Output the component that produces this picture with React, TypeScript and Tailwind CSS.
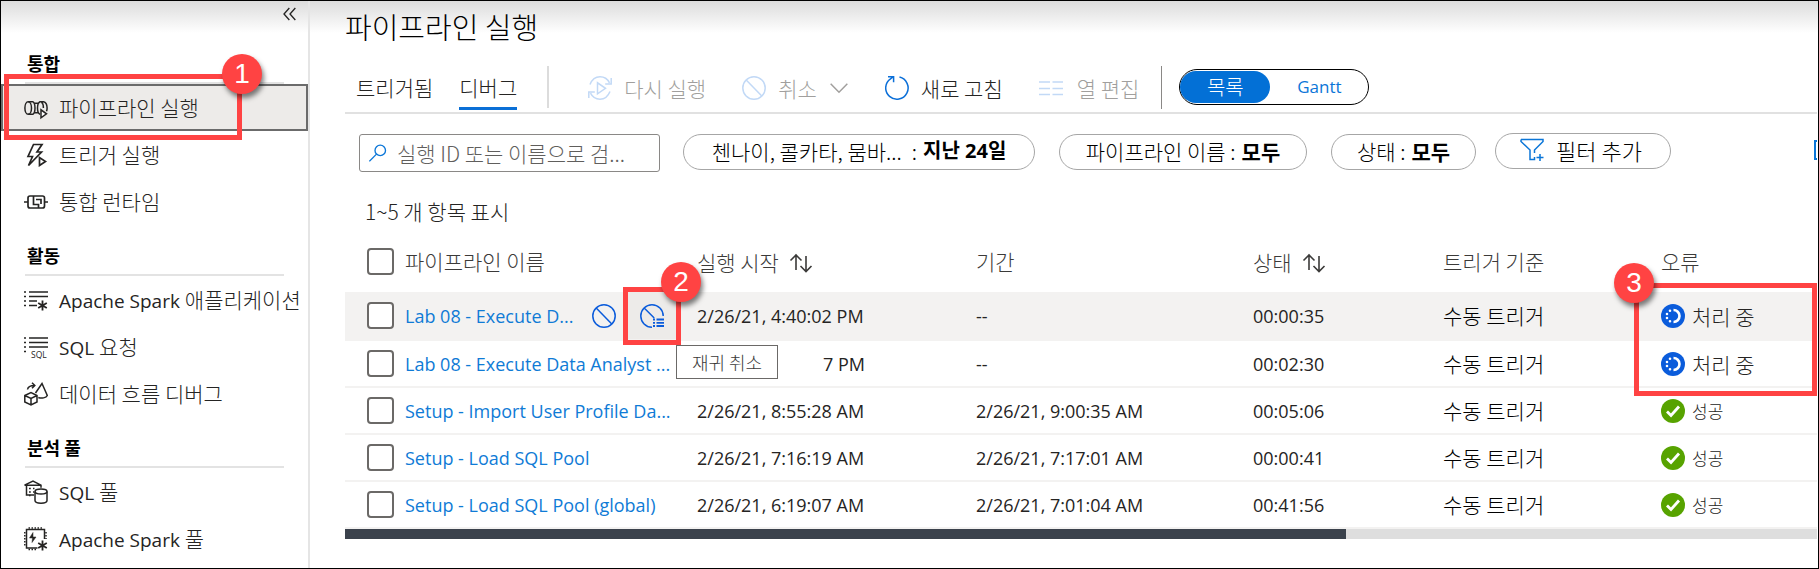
import type { ReactNode } from 'react';

const Ko = ({ children, className = 'text-[21px]' }: { children: ReactNode; className?: string }) => (
  <span className={`font-['Noto_Sans_CJK_KR_Light','Noto_Sans_CJK_KR',sans-serif] font-light ${className}`}>{children}</span>
);

type IconProps = { children: ReactNode; className?: string };
const Icon = ({ children, className = 'size-6' }: IconProps) => (
  <svg viewBox="0 0 24 24" fill="none" stroke="currentColor" strokeWidth="1.5" className={`shrink-0 ${className}`} aria-hidden="true">
    {children}
  </svg>
);

const PipelineRunIcon = () => (
  <Icon>
    <ellipse cx="4.200" cy="12" rx="3.300" ry="6.300" />
    <path d="M4.200 5.700h5M4.200 18.300h5M8.800 5.700c1.500.8 2.200 3.200 2.200 6.300s-.7 5.500-2.200 6.300M10.500 7.200h3.500M10.500 16.800h3.500M16 18.300c-1.800-.8-2.500-3.200-2.500-6.300s.7-5.500 2.500-6.300M15.500 5.700h4c2.200.5 3.600 3 3.600 6.300 0 1.200-.2 2.300-.6 3.200M17.500 5.900c1.300 1.200 1.900 3.500 1.900 6.100" />
    <path d="M17 13.800v8l5.500-4Z" fill="white" />
  </Icon>
);
const TriggerRunIcon = () => (
  <Icon>
    <path d="M9.500 1.500h8.500l-5 7.500h4.500L4.500 22.500 8.500 13.500H4Z" strokeWidth="1.700" />
    <path d="M15.500 14.500v8l6-4Z" fill="white" strokeWidth="1.700" />
  </Icon>
);
const RuntimeIcon = () => (
  <Icon>
    <path d="M0 12h4M20.500 12H24M14.500 18H6a2 2 0 0 1-2-2V8a2 2 0 0 1 2-2h3.500v8.500h5V18M9.500 6h9a2 2 0 0 1 2 2v8a2 2 0 0 1-2 2h-4M12 9.500h5V14" strokeWidth="1.700" />
  </Icon>
);
const SparkAppIcon = () => (
  <Icon>
    <path d="M5 4h19M5 8.500h19M5 13h8M5 17.500h8" />
    <path d="M0 4h2M0 8.500h2M0 13h2M0 17.500h2" />
    <path d="M18.500 12.500v10M14.200 15l8.600 5M22.800 15l-8.600 5" strokeWidth="1.800" />
  </Icon>
);
const SqlRequestIcon = () => (
  <Icon>
    <path d="M5 3h19M5 7.500h19M5 12h19M0 3h2M0 7.500h2M0 12h2M0 16.500h2" />
    <text x="7" y="22.500" fontSize="8.500" fill="currentColor" stroke="none" fontFamily="Open Sans, sans-serif">SQL</text>
  </Icon>
);
const DataFlowIcon = () => (
  <Icon>
    <path d="M.8 13.500 7 10.500l6 3v6.500l-6 3-6.200-3ZM.8 13.500l6.200 3 6-3M7 16.500V23" />
    <path d="M11.500 11 18 1.500l5.300 12c-1 2.500-6 3.200-9 2" />
    <path d="M3.500 7.500C4 4.500 6.500 3.500 10.500 3.500M8 .8l2.800 2.700L8 6.200" />
  </Icon>
);
const SqlPoolIcon = () => (
  <Icon>
    <path d="M10 15H2.500V4.800M.5 5.200 9 1l8 4.200v2.500M.5 5.200H17" />
    <path d="M5 8.500h1.800M9 8.500h1.500M5 12h1.800M9 12h1M5 15.500h1.500" strokeDasharray="1.800 1" />
    <ellipse cx="17" cy="11.500" rx="6" ry="2.500" />
    <path d="M11 11.500V20.500c0 1.500 2.500 2.700 6 2.700s6-1.200 6-2.700v-9" />
  </Icon>
);
const SparkPoolIcon = () => (
  <Icon>
    <path d="M13.500 21H2.500V2.500H20.500V12" />
    <path d="M.8 5v14M22 5v7" strokeDasharray="1.500 1.500" />
    <path d="M4.500 1h15M4.500 22.500h8" strokeDasharray="1.500 1.500" />
    <path d="M9 5.500 5.500 11h3l-.5 4.500L12 10H9Z" fill="currentColor" strokeWidth=".5" />
    <path d="M18.500 13.500v10M14.200 16l8.600 5M22.800 16l-8.600 5" strokeWidth="1.800" />
  </Icon>
);
const BanIcon = () => (
  <Icon>
    <circle cx="12" cy="12" r="11.200" />
    <path d="m4.200 4 15.600 16" />
  </Icon>
);
const BanListIcon = () => (
  <Icon>
    <path d="M12 23.200A11.200 11.200 0 1 1 23.200 12M4.200 4l10 10" />
    <path d="M13 15.500h2M13 18.800h2M13 22h2M16.500 15.500H24M16.500 18.800H24M16.500 22H24" strokeWidth="1.800" />
  </Icon>
);
const RerunIcon = () => (
  <Icon>
    <path d="M2 8.500C4 3.500 7.500.8 12 .8c4 0 7.500 2 9.500 6M23.200 2v6h-6M22 15.500c-2 5-5.500 7.700-10 7.700-4 0-7.500-2-9.500-6M.8 22v-6h6" />
    <path d="M9.500 6.800v11l8-5.500Z" />
  </Icon>
);
const RefreshIcon = () => (
  <Icon>
    <path d="M14.500 1.100A11.200 11.200 0 1 1 5.500 2.800L8 1M3 .8h5.600v5.500" />
  </Icon>
);
const ColumnsIcon = () => (
  <Icon>
    <path d="M0 6h11M13.500 6H24M0 12.500h11M13.500 12.500H24M0 18.500h11M13.500 18.500H24" />
  </Icon>
);
const FilterIcon = () => (
  <Icon>
    <path d="M1 1.500h22v2L14.500 12v3M1 1.500v2L10 12v9.500h4.500V19M20 16v7M16.500 19.500h7" />
  </Icon>
);
const SortIcon = () => (
  <Icon>
    <path d="M7 20V5M1.500 10.500 7 5l5.500 5.500M17 6v15.500M11.500 16l5.500 5.500 5.500-5.500" strokeWidth="1.600" />
  </Icon>
);
const ProgressIcon = () => (
  <Icon>
    <circle cx="12" cy="12" r="12" fill="#0b5cdb" stroke="none" />
    <path d="M12.500 6a6 6 0 0 1 0 12" stroke="white" strokeWidth="2.600" />
    <path d="M9 6.800h.01M6 10h.01M6 14h.01M9 17.200h.01" stroke="white" strokeWidth="2.600" strokeLinecap="round" />
  </Icon>
);
const SuccessIcon = () => (
  <Icon>
    <circle cx="12" cy="12" r="12" fill="#57a300" stroke="none" />
    <path d="m6 12.500 4 4 8-9" stroke="white" strokeWidth="2.800" />
  </Icon>
);

const Callout = ({ n, className }: { n: number; className: string }) => (
  <span className={`absolute z-20 flex size-10 items-center justify-center rounded-full bg-[#ff4343] font-['Liberation_Sans',sans-serif] text-[28px] text-white shadow-[2px_4px_5px_rgba(0,0,0,0.5)] ${className}`}>
    {n}
  </span>
);

const sections: { title: string; items: { icon: ReactNode; latin?: string; ko: string }[] }[] = [
  {
    title: '통합',
    items: [
      { icon: <PipelineRunIcon />, ko: '파이프라인 실행' },
      { icon: <TriggerRunIcon />, ko: '트리거 실행' },
      { icon: <RuntimeIcon />, ko: '통합 런타임' },
    ],
  },
  {
    title: '활동',
    items: [
      { icon: <SparkAppIcon />, latin: 'Apache Spark', ko: '애플리케이션' },
      { icon: <SqlRequestIcon />, latin: 'SQL', ko: '요청' },
      { icon: <DataFlowIcon />, ko: '데이터 흐름 디버그' },
    ],
  },
  {
    title: '분석 풀',
    items: [
      { icon: <SqlPoolIcon />, latin: 'SQL', ko: '풀' },
      { icon: <SparkPoolIcon />, latin: 'Apache Spark', ko: '풀' },
    ],
  },
];

const Sidebar = () => (
  <nav className="w-[309px] shrink-0 border-r-2 border-[#e5e5e5]">
    <div className="flex h-8 justify-end pt-[5px] pr-[10px]">
      <button type="button" aria-label="접기" className="flex h-4 items-center">
        <Icon className="size-4">
          <path d="M11 3 3 12l8 9M20 3l-8 9 8 9" strokeWidth="2" />
        </Icon>
      </button>
    </div>
    {sections.map((s, si) => (
      <section key={s.title}>
        <h2 className="mr-6 ml-6 flex h-[51px] items-center border-b-2 border-[#e3e3e3] pt-2.5 pl-0.5 font-['Noto_Sans_CJK_KR',sans-serif] text-[18px] font-bold text-black">
          {s.title}
        </h2>
        <ul>
          {s.items.map((it, i) => {
            const active = si === 0 && i === 0;
            return (
              <li key={i} className="relative">
                <a
                  href="#"
                  aria-current={active ? 'page' : undefined}
                  className={`flex h-[47px] items-center gap-[11px] border-2 pl-[21px] ${active ? 'border-[#6b6b6b] bg-[#edebe9]' : 'border-transparent'}`}
                >
                  {it.icon}
                  <span className="whitespace-nowrap">
                    {it.latin && <span className="text-[19px]">{it.latin} </span>}
                    <Ko>{it.ko}</Ko>
                  </span>
                </a>
                {active && (
                  <>
                    <span className="pointer-events-none absolute -top-[10px] left-[3px] z-10 h-[66px] w-[238px] border-5 border-[#ff4343]" />
                    <Callout n={1} className="-top-[30px] left-[221px]" />
                  </>
                )}
              </li>
            );
          })}
        </ul>
      </section>
    ))}
  </nav>
);

const Toolbar = () => (
  <div className="flex h-[63px] items-start border-b-2 border-[#e1e1e1] pt-[15px] whitespace-nowrap">
    <button type="button" className="ml-[11px] h-11"><Ko>트리거됨</Ko></button>
    <button type="button" className="ml-[26px] h-11 border-b-3 border-[#0a6fd6] pt-[3px]"><Ko>디버그</Ko></button>
    <span className="ml-[30px] h-[42px] w-0.5 bg-[#dcdcdc]" />
    <button type="button" disabled className="ml-[39px] flex h-11 items-center gap-3 text-[#a19f9d]">
      <span className="text-[#c2d9f6]"><RerunIcon /></span>
      <Ko>다시 실행</Ko>
    </button>
    <button type="button" disabled className="ml-9 flex h-11 items-center gap-3 text-[#a19f9d]">
      <span className="text-[#c2d9f6]"><BanIcon /></span>
      <Ko>취소</Ko>
      <Icon className="size-5"><path d="m2 7 10 10L22 7" strokeWidth="1.800" /></Icon>
    </button>
    <button type="button" className="ml-9 flex h-11 items-center gap-3">
      <span className="text-[#0b6fd8]"><RefreshIcon /></span>
      <Ko>새로 고침</Ko>
    </button>
    <button type="button" disabled className="ml-9 flex h-11 items-center gap-[14px] text-[#a19f9d]">
      <span className="text-[#c2d9f6]"><ColumnsIcon /></span>
      <Ko>열 편집</Ko>
    </button>
    <span className="ml-[22px] h-[43px] w-px bg-[#8a8886]" />
    <div className="mt-[3px] ml-[17px] flex h-9 w-[190px] rounded-full border border-black">
      <button type="button" className="my-px flex w-[90px] items-center justify-center rounded-full bg-[#0370d6] text-white"><Ko className="text-[20px] font-normal">목록</Ko></button>
      <button type="button" className="flex-1 text-[17px] text-[#0b76d8]">Gantt</button>
    </div>
  </div>
);

const pill = 'flex h-9 items-center justify-center rounded-full border border-[#a6a6a6] pb-0.5 text-black whitespace-nowrap';

const Filters = () => (
  <div className="mt-5 flex items-start pl-[14px]">
    <div className="flex h-[38px] w-[301px] shrink-0 items-center gap-[10px] rounded-[3px] border border-[#8a8886] pl-[9px] text-[#605e5c]">
      <Icon className="size-[18px] text-[#0b76d8]">
        <circle cx="15" cy="8.500" r="7" strokeWidth="1.800" />
        <path d="m10 13.500-9.500 9.500" strokeWidth="1.800" />
      </Icon>
      <input
        type="text"
        aria-label="실행 ID 또는 이름으로 검색"
        placeholder="실행 ID 또는 이름으로 검..."
        className="w-full min-w-0 bg-transparent font-['Noto_Sans_CJK_KR_Light','Noto_Sans_CJK_KR',sans-serif] text-[21px] font-light outline-none placeholder:text-[#605e5c]"
      />
    </div>
    <button type="button" className={`ml-[23px] w-[352px] ${pill}`}>
      <Ko>첸나이, 콜카타, 뭄바...</Ko>
      <span className="ml-2.5 flex items-center gap-1.5"><Ko>:</Ko><b className="text-[20px]">지난 24일</b></span>
    </button>
    <button type="button" className={`ml-6 w-[248px] gap-1.5 ${pill}`}>
      <Ko>파이프라인 이름 :</Ko><b className="font-['Noto_Sans_CJK_KR',sans-serif] text-[21px]">모두</b>
    </button>
    <button type="button" className={`ml-6 w-[145px] gap-1.5 ${pill}`}>
      <Ko>상태 :</Ko><b className="font-['Noto_Sans_CJK_KR',sans-serif] text-[21px]">모두</b>
    </button>
    <button type="button" className={`-mt-px ml-[19px] w-[176px] gap-3 pr-1 ${pill}`}>
      <span className="text-[#0b76d8]"><FilterIcon /></span>
      <Ko className="text-[22px]">필터 추가</Ko>
    </button>
    <span className="mt-[6px] ml-auto h-5 w-[3px] border-y-2 border-l-2 border-[#0b76d8]" />
  </div>
);

const rows = [
  { name: 'Lab 08 - Execute D...', start: '2/26/21, 4:40:02 PM', end: '--', time: '00:00:35', done: false },
  { name: 'Lab 08 - Execute Data Analyst ...', start: '7 PM', end: '--', time: '00:02:30', done: false },
  { name: 'Setup - Import User Profile Da...', start: '2/26/21, 8:55:28 AM', end: '2/26/21, 9:00:35 AM', time: '00:05:06', done: true },
  { name: 'Setup - Load SQL Pool', start: '2/26/21, 7:16:19 AM', end: '2/26/21, 7:17:01 AM', time: '00:00:41', done: true },
  { name: 'Setup - Load SQL Pool (global)', start: '2/26/21, 6:19:07 AM', end: '2/26/21, 7:01:04 AM', time: '00:41:56', done: true },
];

const Check = ({ label }: { label: string }) => (
  <input type="checkbox" aria-label={label} className="ml-[22px] block size-[27px] appearance-none rounded-[4px] border-2 border-[#6b6967] bg-white" />
);

const RunsTable = () => (
  <table className="mt-1.5 w-full table-fixed border-collapse text-left whitespace-nowrap">
    <colgroup>
      <col className="w-[60px]" />
      <col className="w-[292px]" />
      <col className="w-[279px]" />
      <col className="w-[277px]" />
      <col className="w-[190px]" />
      <col className="w-[218px]" />
      <col />
    </colgroup>
    <thead>
      <tr className="h-[61px] text-[#3b3a39]">
        <th><Check label="모두 선택" /></th>
        <th><Ko>파이프라인 이름</Ko></th>
        <th><span className="flex items-center gap-2.5"><Ko>실행 시작</Ko><SortIcon /></span></th>
        <th><Ko>기간</Ko></th>
        <th><span className="flex items-center gap-2.5"><Ko>상태</Ko><SortIcon /></span></th>
        <th><Ko>트리거 기준</Ko></th>
        <th><Ko>오류</Ko></th>
      </tr>
    </thead>
    <tbody>
      {rows.map((r, i) => (
        <tr key={i} className={`h-[47px] border-b-2 border-[#f3f2f1] ${i === 0 ? 'bg-[#f3f2f1]' : ''}`}>
          <td><Check label={r.name} /></td>
          <td>
            <div className="flex items-center justify-between pr-[21px] text-[#0f7bd6]">
              <a href="#">{r.name}</a>
              {i === 0 && (
                <div className="flex items-center text-[#0b5cdb]">
                  <button type="button" aria-label="취소"><BanIcon /></button>
                  <div className="relative ml-3">
                    <button type="button" aria-label="재귀 취소" className="flex h-[47px] w-12 items-center justify-center bg-[#edebe9]"><BanListIcon /></button>
                    <span className="pointer-events-none absolute -top-[5px] -left-[5px] z-10 h-[58px] w-[58px] border-5 border-[#ff4343]" />
                    <Callout n={2} className="-top-[30px] left-[33px]" />
                    <span role="tooltip" className="absolute top-[53px] left-12 z-10 flex h-[34px] w-[102px] items-center justify-center border border-[#6b6967] bg-white text-[#3b3a39]">
                      <Ko className="text-[18px]">재귀 취소</Ko>
                    </span>
                  </div>
                </div>
              )}
            </div>
          </td>
          <td className={i === 1 ? 'pl-[126px]' : ''}>{r.start}</td>
          <td>{r.end}</td>
          <td>{r.time}</td>
          <td className="text-black"><Ko>수동 트리거</Ko></td>
          <td className="relative">
            <span className="flex items-center gap-[7px]">
              {r.done ? <SuccessIcon /> : <ProgressIcon />}
              {r.done ? <Ko className="text-[17px]">성공</Ko> : <Ko>처리 중</Ko>}
            </span>
            {i === 0 && (
              <>
                <span className="pointer-events-none absolute -top-[9px] right-0 -left-[27px] z-10 h-[113px] border-5 border-[#ff4343]" />
                <Callout n={3} className="-top-[29px] -left-[47px]" />
              </>
            )}
          </td>
        </tr>
      ))}
    </tbody>
  </table>
);

export default function App() {
  return (
    <div className="flex min-h-screen border border-black bg-white bg-linear-to-b from-[#dcdcdc] to-white to-[32px] font-['Open_Sans','Noto_Sans_CJK_KR',sans-serif] text-[18px] leading-6 text-[#252423]">
      <Sidebar />
      <main className="flex min-w-0 flex-1 flex-col pr-px pl-[35px]">
        <h1 className="flex h-[50px] items-center text-black"><Ko className="text-[29px]">파이프라인 실행</Ko></h1>
        <Toolbar />
        <Filters />
        <p className="mt-[27px] pl-5"><Ko>1~5 개 항목 표시</Ko></p>
        <RunsTable />
        <div className="h-2.5 bg-[#dedede]">
          <div className="h-full w-[68%] bg-[#3b424c]" />
        </div>
      </main>
    </div>
  );
}
